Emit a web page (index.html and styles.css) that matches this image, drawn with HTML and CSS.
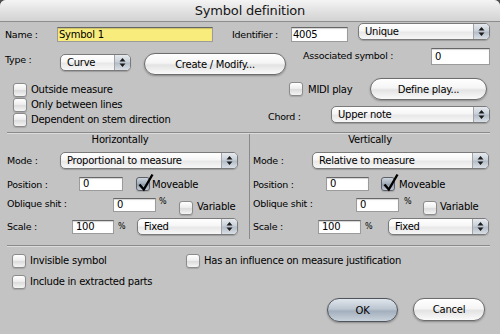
FILE: index.html
```html
<!DOCTYPE html>
<html lang="en">
<head>
    <meta charset="UTF-8">
    <meta name="viewport" content="width=device-width, initial-scale=1.0">
    <link rel="stylesheet" href="styles.css">
    <title>Symbol definition</title>
</head>
<body>
    <div class="window">
        <div class="titlebar">Symbol definition</div>
        <div class="content">
            <!-- name / identifier -->
            <div class="row row-name">
                <span class="lbl lbl-name">Name :</span>
                <span class="field f-name">Symbol 1</span>
                <span class="lbl lbl-ident">Identifier :</span>
                <span class="field f-ident">4005</span>
                <div class="popup p-unique">
                    <span class="popup-text">Unique</span>
                    <span class="arrows"><svg width="7" height="11" viewBox="0 0 7 11"><path d="M3.5 1L6.5 4.5H0.5Z M0.5 6.5H6.5L3.5 10Z"/></svg></span>
                </div>
            </div>

            <!-- type -->
            <div class="row row-type">
                <span class="lbl lbl-type">Type :</span>
                <div class="popup p-curve">
                    <span class="popup-text">Curve</span>
                    <span class="arrows"><svg width="7" height="11" viewBox="0 0 7 11"><path d="M3.5 1L6.5 4.5H0.5Z M0.5 6.5H6.5L3.5 10Z"/></svg></span>
                </div>
                <span class="btn b-create">Create / Modify...</span>
                <span class="lbl lbl-assoc">Associated symbol :</span>
                <span class="field f-assoc">0</span>
            </div>

            <!-- options -->
            <div class="row opts">
                <div class="opts-left">
                    <div class="chk"><span class="box"></span><span class="txt">Outside measure</span></div>
                    <div class="chk"><span class="box"></span><span class="txt">Only between lines</span></div>
                    <div class="chk"><span class="box"></span><span class="txt">Dependent on stem direction</span></div>
                </div>
                <div class="opts-right">
                    <div class="row midi">
                        <span class="box"></span><span class="txt">MIDI play</span>
                        <span class="btn b-define">Define play...</span>
                    </div>
                    <div class="row chord">
                        <span class="lbl lbl-chord">Chord :</span>
                        <div class="popup p-chord">
                            <span class="popup-text">Upper note</span>
                            <span class="arrows"><svg width="7" height="11" viewBox="0 0 7 11"><path d="M3.5 1L6.5 4.5H0.5Z M0.5 6.5H6.5L3.5 10Z"/></svg></span>
                        </div>
                    </div>
                </div>
            </div>

            <div class="sep sep-a"></div>

            <!-- horizontally / vertically -->
            <div class="row axes">
                <div class="axis axis-h">
                    <div class="axis-title">Horizontally</div>
                    <div class="row r-mode">
                        <span class="lbl l-mode">Mode :</span>
                        <div class="popup p-mode">
                            <span class="popup-text">Proportional to measure</span>
                            <span class="arrows"><svg width="7" height="11" viewBox="0 0 7 11"><path d="M3.5 1L6.5 4.5H0.5Z M0.5 6.5H6.5L3.5 10Z"/></svg></span>
                        </div>
                    </div>
                    <div class="row r-pos">
                        <span class="lbl l-pos">Position :</span>
                        <span class="field small f-pos">0</span>
                        <span class="box on b-move"><svg class="tick" width="18" height="20" viewBox="0 0 18 20"><path d="M2.5 12.5L6.8 17.5L15.5 2.5"/></svg></span>
                        <span class="txt t-move">Moveable</span>
                    </div>
                    <div class="row r-obl">
                        <span class="lbl l-obl">Oblique shit :</span>
                        <span class="field small f-obl">0</span>
                        <span class="pct p-obl">%</span>
                        <span class="box b-var"></span>
                        <span class="txt t-var">Variable</span>
                    </div>
                    <div class="row r-scale">
                        <span class="lbl l-scale">Scale :</span>
                        <span class="field small f-scale">100</span>
                        <span class="pct p-scale">%</span>
                        <div class="popup p-fixed">
                            <span class="popup-text">Fixed</span>
                            <span class="arrows"><svg width="7" height="11" viewBox="0 0 7 11"><path d="M3.5 1L6.5 4.5H0.5Z M0.5 6.5H6.5L3.5 10Z"/></svg></span>
                        </div>
                    </div>
                </div>
                <div class="axis axis-v">
                    <div class="axis-title">Vertically</div>
                    <div class="row r-mode">
                        <span class="lbl l-mode">Mode :</span>
                        <div class="popup p-mode">
                            <span class="popup-text">Relative to measure</span>
                            <span class="arrows"><svg width="7" height="11" viewBox="0 0 7 11"><path d="M3.5 1L6.5 4.5H0.5Z M0.5 6.5H6.5L3.5 10Z"/></svg></span>
                        </div>
                    </div>
                    <div class="row r-pos">
                        <span class="lbl l-pos">Position :</span>
                        <span class="field small f-pos">0</span>
                        <span class="box on b-move"><svg class="tick" width="18" height="20" viewBox="0 0 18 20"><path d="M2.5 12.5L6.8 17.5L15.5 2.5"/></svg></span>
                        <span class="txt t-move">Moveable</span>
                    </div>
                    <div class="row r-obl">
                        <span class="lbl l-obl">Oblique shit :</span>
                        <span class="field small f-obl">0</span>
                        <span class="pct p-obl">%</span>
                        <span class="box b-var"></span>
                        <span class="txt t-var">Variable</span>
                    </div>
                    <div class="row r-scale">
                        <span class="lbl l-scale">Scale :</span>
                        <span class="field small f-scale">100</span>
                        <span class="pct p-scale">%</span>
                        <div class="popup p-fixed">
                            <span class="popup-text">Fixed</span>
                            <span class="arrows"><svg width="7" height="11" viewBox="0 0 7 11"><path d="M3.5 1L6.5 4.5H0.5Z M0.5 6.5H6.5L3.5 10Z"/></svg></span>
                        </div>
                    </div>
                </div>
            </div>

            <div class="sep sep-b"></div>

            <!-- flags -->
            <div class="row flag-row">
                <div class="chk flag-wide"><span class="box"></span><span class="txt">Invisible symbol</span></div>
                <div class="chk"><span class="box"></span><span class="txt">Has an influence on measure justification</span></div>
            </div>
            <div class="row flag-row">
                <div class="chk"><span class="box"></span><span class="txt">Include in extracted parts</span></div>
            </div>

            <div class="row actions">
                <span class="btn b-ok">OK</span>
                <span class="btn b-cancel">Cancel</span>
            </div>
        </div>
    </div>
</body>
</html>
```

FILE: styles.css
```css
*{
    margin: 0;
    padding: 0;
    box-sizing: border-box;
}
html,body{
    width: 100%;
    height: 100%;
}
body{
    background: #4e4e4e;
    font-family: "DejaVu Sans", "Liberation Sans", sans-serif;
    font-size: 10px;
    letter-spacing: -0.25px;
    color: #000;
}
.window{
    width: 500px;
    height: 334px;
    background: #c3c3c3;
    border-radius: 6px 6px 0 0;
    overflow: hidden;
}
.titlebar{
    height: 22px;
    line-height: 21px;
    border-bottom: 1px solid #8d8d8d;
    background: linear-gradient(#f4f4f4, #e4e4e4 45%, #d3d3d3);
    text-align: center;
    font-size: 13px;
    letter-spacing: -0.2px;
    color: #161616;
}
.content{
    padding: 0 10px 0 5px;
}
.row{
    display: flex;
}
.lbl{
    font-size: 9.5px;
    white-space: nowrap;
}
.txt{
    white-space: nowrap;
}

/* widgets */
.field{
    display: block;
    height: 15px;
    line-height: 13px;
    background: #fff;
    border: 1px solid #9b9b9b;
    border-top-color: #666;
    box-shadow: inset 0 1px 1px rgba(0,0,0,.18);
    padding-left: 3px;
    white-space: nowrap;
}
.field.small{
    height: 14px;
    line-height: 12px;
}
.popup{
    display: flex;
    height: 17px;
    border: 1px solid #7a7a7a;
    border-radius: 5px;
    overflow: hidden;
    background: linear-gradient(#fff, #f6f6f6 45%, #e8e8e8 55%, #f7f7f7);
    box-shadow: 0 1px 1px rgba(0,0,0,.2);
}
.popup-text{
    flex: 1;
    padding-left: 6px;
    line-height: 15px;
    white-space: nowrap;
}
.arrows{
    width: 16px;
    display: flex;
    align-items: center;
    justify-content: center;
    border-left: 1px solid #a3a3a3;
    background: linear-gradient(#e6eaef, #c8d0d9 45%, #b4bec9 55%, #dadfe6);
}
.arrows svg{
    fill: #1b1b1b;
}
.btn{
    display: flex;
    align-items: center;
    justify-content: center;
    height: 22px;
    border: 1px solid #6d6d6d;
    border-radius: 11px;
    background: linear-gradient(#fff, #f5f5f5 45%, #e3e3e3 55%, #fafafa);
    box-shadow: 0 1px 2px rgba(0,0,0,.3);
    white-space: nowrap;
}
.box{
    position: relative;
    flex: none;
    width: 14px;
    height: 14px;
    border: 1px solid #8b8b8b;
    border-radius: 3px;
    background: linear-gradient(#fff, #eee 45%, #dcdcdc 55%, #f5f5f5);
    box-shadow: 0 1px 1px rgba(0,0,0,.15);
}
.box.on{
    border-color: #5c6066;
    background: linear-gradient(#cdd4dc, #a3afbc 45%, #909dac 55%, #c3ccd6);
}
.tick{
    position: absolute;
    left: 0;
    top: -6px;
}
.tick path{
    fill: none;
    stroke: #000;
    stroke-width: 2.4;
}
.chk{
    display: flex;
    align-items: center;
    height: 15px;
}
.chk .box{
    margin-right: 4px;
}
.pct{
    width: 6px;
    font-size: 8px;
}

/* name row */
.row-name{
    margin-top: 1px;
    height: 19px;
    align-items: flex-start;
}
.row-name .lbl{
    line-height: 15px;
    margin-top: 4px;
}
.lbl-name{ width: 52px; }
.f-name{
    width: 156px;
    margin-top: 4px;
    background: #f8ec7c;
    padding-left: 1px;
}
.lbl-ident{
    margin-left: 19px;
    width: 59px;
}
.f-ident{
    width: 57px;
    margin-top: 4px;
    padding-left: 1px;
}
.p-unique{
    margin-left: 10px;
    width: 132px;
}

/* type row */
.row-type{
    margin-top: 6px;
    height: 27px;
    align-items: flex-start;
}
.lbl-type{
    width: 55px;
    line-height: 16px;
    margin-top: 4px;
}
.p-curve{
    width: 71px;
    margin-top: 6px;
}
.b-create{
    width: 142px;
    margin-left: 13px;
    margin-top: 5px;
}
.lbl-assoc{
    margin-left: 17px;
    width: 128px;
    line-height: 15px;
}
.f-assoc{
    width: 59px;
    height: 17px;
    line-height: 15px;
}

/* options */
.opts{
    margin-top: 3px;
}
.opts-left{
    width: 263px;
    padding-top: 4px;
}
.opts-left .chk{
    padding-left: 8px;
}
.opts-right{
    width: 222px;
}
.midi{
    height: 22px;
    align-items: center;
    padding-left: 21px;
}
.midi .box{
    margin-right: 5px;
}
.b-define{
    width: 117px;
    margin-left: auto;
    margin-right: 3px;
}
.chord{
    margin-top: 6px;
    align-items: flex-start;
}
.lbl-chord{
    width: 63px;
    line-height: 17px;
    margin-top: 2px;
}
.p-chord{
    flex: 1;
}

.sep{
    height: 2px;
    margin-left: 2px;
    border-top: 1px solid #8a8a8a;
    border-bottom: 1px solid #dcdcdc;
}
.sep-a{ margin-top: 5px; }
.sep-b{ margin-top: 6px; }

/* horizontally / vertically */
.axis{
    padding-bottom: 4px;
}
.axis-h{
    width: 244px;
    padding-left: 2px;
}
.axis-v{
    width: 241px;
    padding-left: 3px;
    border-left: 1px solid #8a8a8a;
}
.axis-title{
    line-height: 12px;
    text-align: center;
}
.axis-h .axis-title{ padding-right: 16px; }
.axis-v .axis-title{ padding-right: 3px; }

.r-mode{
    margin-top: 6px;
    height: 17px;
    align-items: center;
}
.r-pos{
    margin-top: 7px;
    height: 16px;
    align-items: center;
}
.r-obl{
    margin-top: 5px;
    height: 18px;
    align-items: flex-start;
}
.r-scale{
    margin-top: 3px;
    height: 17px;
    align-items: center;
}
.r-obl .lbl{ line-height: 14px; }
.f-obl{ margin-top: 1px; }
.p-obl{ line-height: 10px; }
.b-var{ margin-top: 4px; }
.t-var{
    line-height: 14px;
    margin-top: 3px;
}
.p-fixed{ width: 101px; }

.axis-h .l-mode{ width: 53px; }
.axis-h .p-mode{ width: 178px; }
.axis-h .l-pos{ width: 72px; }
.axis-h .f-pos{ width: 44px; }
.axis-h .b-move{ margin-left: 13px; }
.axis-h .t-move{ margin-left: 2px; }
.axis-h .l-obl{ width: 106px; }
.axis-h .f-obl{ width: 43px; }
.axis-h .p-obl{ margin-left: 3px; }
.axis-h .b-var{ margin-left: 14px; }
.axis-h .t-var{ margin-left: 4px; }
.axis-h .l-scale{ width: 65px; }
.axis-h .f-scale{ width: 42px; }
.axis-h .p-scale{ margin-left: 4px; }
.axis-h .p-fixed{ margin-left: 13px; }

.axis-v .l-mode{ width: 59px; }
.axis-v .p-mode{ width: 177px; }
.axis-v .l-pos{ width: 73px; }
.axis-v .f-pos{ width: 43px; }
.axis-v .b-move{ margin-left: 12px; }
.axis-v .t-move{ margin-left: 4px; }
.axis-v .l-obl{ width: 103px; }
.axis-v .f-obl{ width: 43px; }
.axis-v .p-obl{ margin-left: 5px; }
.axis-v .b-var{ margin-left: 13px; }
.axis-v .t-var{ margin-left: 3px; }
.axis-v .l-scale{ width: 65px; }
.axis-v .f-scale{ width: 43px; }
.axis-v .p-scale{ margin-left: 4px; }
.axis-v .p-fixed{ margin-left: 17px; }

/* flags + buttons */
.flag-row{
    margin-top: 6px;
    padding-left: 7px;
}
.flag-wide{
    width: 174px;
}
.actions{
    margin-top: 9px;
    justify-content: flex-end;
    align-items: flex-start;
    gap: 15px;
    padding-right: 5px;
}
.b-ok{
    width: 71px;
    height: 24px;
    border-radius: 12px;
    border-color: #50555c;
    background: linear-gradient(#dfe5ec, #bcc6d1 45%, #a3afbd 55%, #c9d2dc);
}
.b-cancel{
    width: 72px;
    height: 23px;
}
```
